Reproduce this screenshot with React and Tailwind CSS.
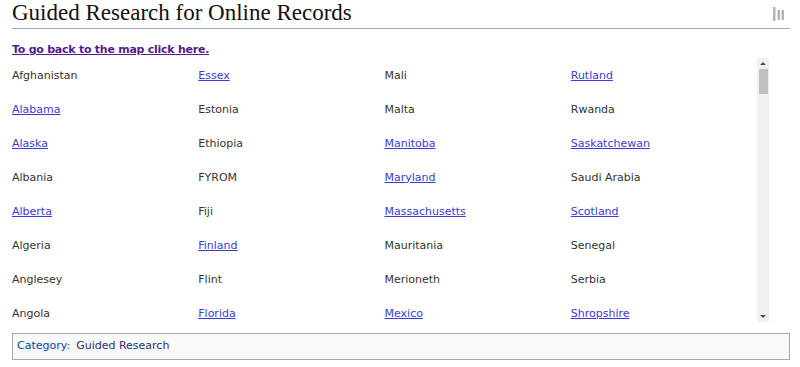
import React from "react";

const columns = [
  [
    { name: "Afghanistan" },
    { name: "Alabama", link: true },
    { name: "Alaska", link: true },
    { name: "Albania" },
    { name: "Alberta", link: true },
    { name: "Algeria" },
    { name: "Anglesey" },
    { name: "Angola" },
  ],
  [
    { name: "Essex", link: true },
    { name: "Estonia" },
    { name: "Ethiopia" },
    { name: "FYROM" },
    { name: "Fiji" },
    { name: "Finland", link: true },
    { name: "Flint" },
    { name: "Florida", link: true },
  ],
  [
    { name: "Mali" },
    { name: "Malta" },
    { name: "Manitoba", link: true },
    { name: "Maryland", link: true },
    { name: "Massachusetts", link: true },
    { name: "Mauritania" },
    { name: "Merioneth" },
    { name: "Mexico", link: true },
  ],
  [
    { name: "Rutland", link: true },
    { name: "Rwanda" },
    { name: "Saskatchewan", link: true },
    { name: "Saudi Arabia" },
    { name: "Scotland", link: true },
    { name: "Senegal" },
    { name: "Serbia" },
    { name: "Shropshire", link: true },
  ],
];

const rows = columns[0].map((_, i) => columns.map((col) => col[i]));

const BarsIcon = () => (
  <svg width="16" height="14" viewBox="0 0 16 14" className="text-[#b5b5b5]">
    <rect x="1" y="0" width="2.5" height="14" fill="currentColor" />
    <rect x="5.5" y="3" width="2.5" height="10" fill="currentColor" />
    <rect x="9.5" y="3" width="2.5" height="10" fill="currentColor" />
  </svg>
);

export default function App() {
  return (
    <div className="w-[800px] h-[367px] bg-white overflow-hidden pl-[12px] pr-[10px] font-['DejaVu_Sans',sans-serif] text-[11px] text-[#333]">
      {/* Title */}
      <div className="flex items-end justify-between border-b border-[#a2a9b1] h-[29px]">
        <h1 className="font-['Liberation_Serif',serif] text-[23px] leading-none text-[#111] pb-[4px]">
          Guided Research for Online Records
        </h1>
        <div className="pb-[7px] pr-[2px]">
          <BarsIcon />
        </div>
      </div>

      <div className="pt-[13px] h-[29px]">
        <a href="#" className="font-bold text-[#551a8b] underline leading-none tracking-[-0.25px]">
          To go back to the map click here.
        </a>
      </div>

      {/* List */}
      <div className="flex h-[264px] w-[757px]">
        <div className="flex-1 overflow-hidden pt-[1px]">
          {rows.map((row, i) => (
            <div key={i} className="grid grid-cols-4 h-[34px] items-center">
              {row.map((item) => (
                <div key={item.name}>
                  {item.link ? (
                    <a href="#" className="text-[#3b3bd6] underline">
                      {item.name}
                    </a>
                  ) : (
                    <span>{item.name}</span>
                  )}
                </div>
              ))}
            </div>
          ))}
        </div>
        <div className="w-[12px] bg-[#f1f1f1] flex flex-col items-center">
          <div className="h-[11px] flex items-center justify-center">
            <div className="w-0 h-0 border-x-[3px] border-x-transparent border-b-[3px] border-b-[#505050]" />
          </div>
          <div className="w-[9px] h-[25px] bg-[#c1c1c1]" />
          <div className="flex-1" />
          <div className="h-[11px] flex items-center justify-center">
            <div className="w-0 h-0 border-x-[3px] border-x-transparent border-t-[3px] border-t-[#505050]" />
          </div>
        </div>
      </div>

      {/* Category */}
      <div className="mt-[11px] w-[778px] h-[27px] border border-[#a2a9b1] bg-[#f8f9fa] flex items-center gap-[6px] px-[4px]">
        <span className="text-[#0645ad]">Category:</span>
        <a href="#" className="text-[#2e2e6e]">Guided Research</a>
      </div>
    </div>
  );
}
